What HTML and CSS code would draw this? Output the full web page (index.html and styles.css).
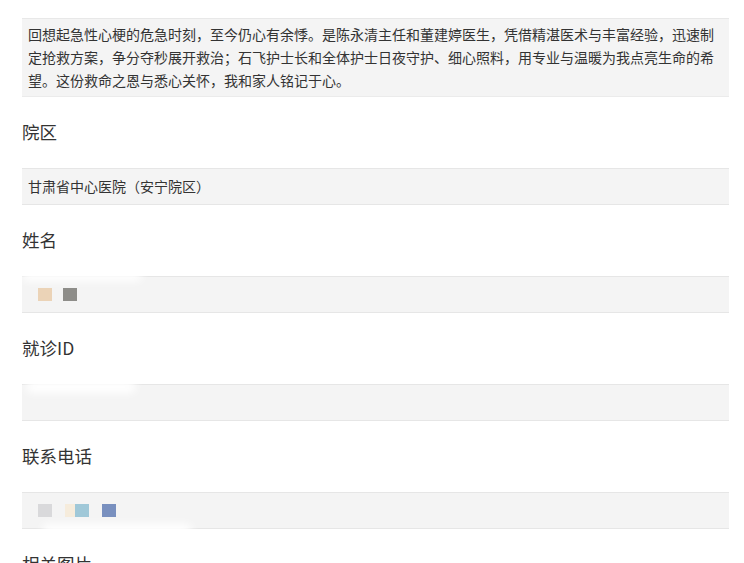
FILE: index.html
```html
<!DOCTYPE html>
<html lang="zh-CN">
<head>
    <meta charset="UTF-8">
    <meta name="viewport" content="width=device-width, initial-scale=1.0">
    <title>感谢信</title>
    <link rel="stylesheet" href="styles.css">
</head>
<body>

<div class="letter">
    回想起急性心梗的危急时刻，至今仍心有余悸。是陈永清主任和董建婷医生，凭借精湛医术与丰富经验，迅速制定抢救方案，争分夺秒展开救治；石飞护士长和全体护士日夜守护、细心照料，用专业与温暖为我点亮生命的希望。这份救命之恩与悉心关怀，我和家人铭记于心。
</div>

<div class="field">
    <div class="label">院区</div>
    <div class="value">甘肃省中心医院（安宁院区）</div>
</div>

<div class="field">
    <div class="label">姓名</div>
    <div class="value masked">
        <span class="smudge smudge-name"></span>
        <span class="dot" style="background:#ebd3b7"></span>
        <span class="dot gap" style="background:#8e8d89"></span>
    </div>
</div>

<div class="field">
    <div class="label">就诊ID</div>
    <div class="value masked">
        <span class="smudge smudge-id"></span>
    </div>
</div>

<div class="field">
    <div class="label">联系电话</div>
    <div class="value masked">
        <span class="smudge smudge-phone"></span>
        <span class="dot" style="background:#d9d9db"></span>
        <span class="dot wide-gap" style="background:#f6ecdc;width:10px"></span>
        <span class="dot" style="background:#a0c8d8"></span>
        <span class="dot wide-gap" style="background:#7990bf"></span>
    </div>
</div>

<div class="field">
    <div class="label">相关图片</div>
</div>

</body>
</html>
```

FILE: styles.css
```css
body {
    margin: 0;
    padding: 18px 15px 0 22px;
    background-color: #fff;
    color: #333;
    font-family: "Noto Sans CJK SC", "Noto Sans", sans-serif;
}
.letter {
    background-color: #f4f4f4;
    border-top: 1px solid #e8e8e8;
    border-bottom: 1px solid #ebebeb;
    padding: 4px 6px;
    font-size: 14px;
    line-height: 23px;
    color: #333;
}
.field {
    margin-top: 23px;
}
.label {
    font-size: 17.5px;
    line-height: 24px;
    color: #333;
    margin-bottom: 24px;
}
.value {
    position: relative;
    height: 35px;
    background-color: #f4f4f4;
    border-top: 1px solid #e6e6e6;
    border-bottom: 1px solid #e6e6e6;
    padding: 0 6px;
    font-size: 14px;
    line-height: 35px;
    display: flex;
    align-items: center;
}
.masked {
    padding-left: 16px;
}
.dot {
    position: relative;
    width: 14px;
    height: 13px;
}
.dot.gap {
    margin-left: 11px;
}
.dot.wide-gap {
    margin-left: 13px;
}
.smudge {
    position: absolute;
    background: #fff;
    filter: blur(4px);
    border-radius: 10px;
}
.smudge-name {
    left: 0;
    top: -6px;
    width: 120px;
    height: 10px;
}
.smudge-id {
    left: 4px;
    top: -4px;
    width: 110px;
    height: 12px;
}
.smudge-phone {
    left: 20px;
    top: 31px;
    width: 150px;
    height: 12px;
}
```
